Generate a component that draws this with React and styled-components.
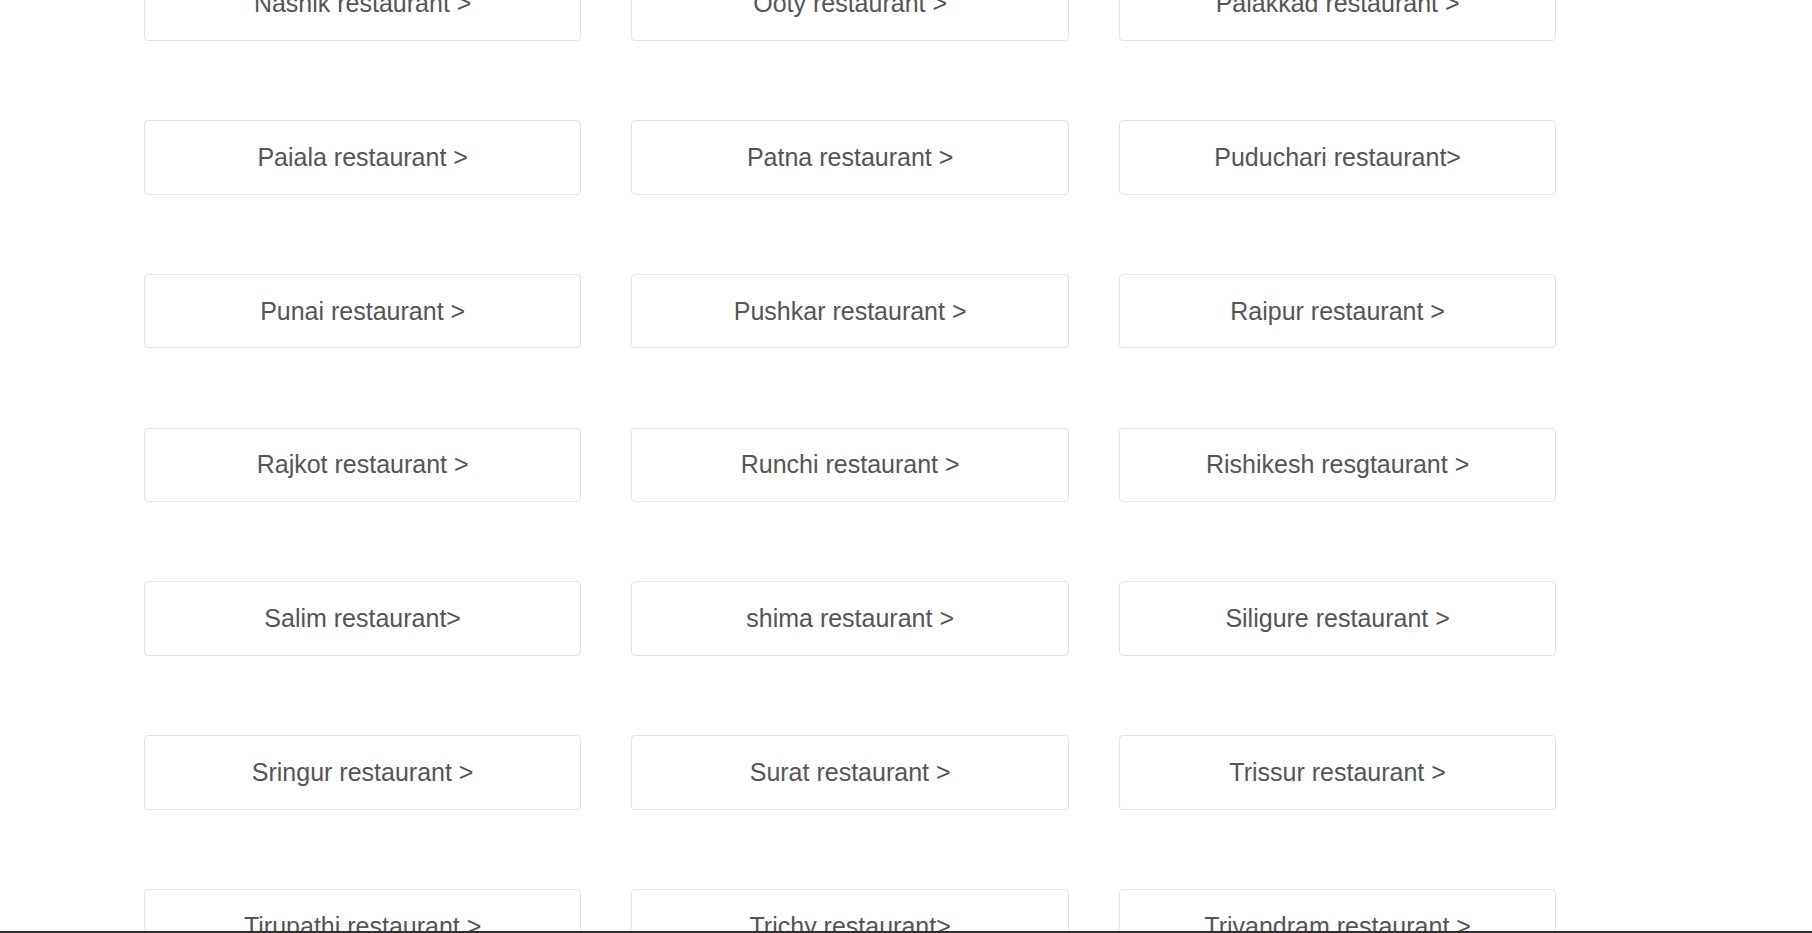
import React from "react";
import styled, { createGlobalStyle } from "styled-components";

const Global = createGlobalStyle`
  html, body {
    margin: 0;
    padding: 0;
    background: #ffffff;
    overflow: hidden;
    font-family: "Liberation Sans", Arial, sans-serif;
  }
`;

const Page = styled.div`
  width: 1812px;
  height: 933px;
  overflow: hidden;
  position: relative;
`;

const Grid = styled.div`
  display: grid;
  grid-template-columns: repeat(3, 437.3px);
  column-gap: 50.2px;
  row-gap: 79.3px;
  padding-left: 144px;
  margin-top: -33.8px;
`;

const Card = styled.a`
  display: flex;
  align-items: center;
  justify-content: center;
  box-sizing: border-box;
  height: 74.5px;
  border: 1px solid #e3e3e3;
  border-radius: 4px;
  background: #fff;
  color: #555555;
  font-size: 25px;
  text-decoration: none;
  white-space: nowrap;
`;

const BottomEdge = styled.div`
  position: fixed;
  left: 0;
  right: 0;
  bottom: 0;
  height: 2.3px;
  background: #2e2e2e;
`;

const places = [
  "Nashik restaurant >",
  "Ooty restaurant >",
  "Palakkad restaurant >",
  "Paiala restaurant >",
  "Patna restaurant >",
  "Puduchari restaurant>",
  "Punai restaurant >",
  "Pushkar restaurant >",
  "Raipur restaurant >",
  "Rajkot restaurant >",
  "Runchi restaurant >",
  "Rishikesh resgtaurant >",
  "Salim restaurant>",
  "shima restaurant >",
  "Siligure restaurant >",
  "Sringur restaurant >",
  "Surat restaurant >",
  "Trissur restaurant >",
  "Tirupathi restaurant >",
  "Trichy restaurant>",
  "Trivandram restaurant >",
];

export default function App() {
  return (
    <Page>
      <Global />
      <Grid>
        {places.map((p) => (
          <Card key={p} href="#">
            {p}
          </Card>
        ))}
      </Grid>
      <BottomEdge />
    </Page>
  );
}
